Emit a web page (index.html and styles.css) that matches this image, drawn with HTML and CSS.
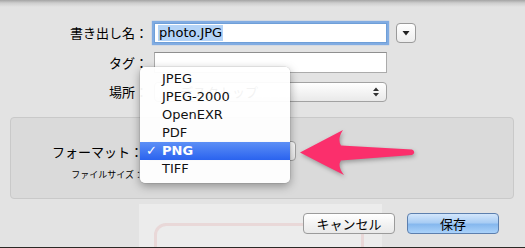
FILE: index.html
```html
<!DOCTYPE html>
<html lang="ja">
<head>
<meta charset="utf-8">
<link rel="stylesheet" href="styles.css">
</head>
<body>
<div class="sheet">
  <div class="ghost"><div class="ghost-frame"></div></div>

  <div class="row r1">
    <span class="label">書き出し名：</span>
    <div class="field focus"><span class="sel">photo.JPG</span></div>
    <div class="disclose"><svg width="10" height="8" viewBox="0 0 10 8"><path d="M1.5 2 L8.5 2 L5 6.5 Z" fill="#222"/></svg></div>
  </div>
  <div class="row r2">
    <span class="label">タグ：</span>
    <div class="field"></div>
  </div>
  <div class="row r3">
    <span class="label">場所：</span>
    <div class="popup loc">
      <span class="ptext">デスクトップ</span>
      <svg class="updown" width="8" height="12" viewBox="0 0 8 12"><path d="M4 1.5 L7 5 L1 5 Z M4 10.5 L7 7 L1 7 Z" fill="#333"/></svg>
    </div>
  </div>

  <div class="panel">
    <div class="prow">
      <span class="plabel">フォーマット：</span>
      <div class="popup fmt"></div>
    </div>
    <div class="prow small">
      <span class="plabel sm">ファイルサイズ：</span>
    </div>
  </div>

  <div class="footer">
    <div class="btn">キャンセル</div>
    <div class="btn primary">保存</div>
  </div>

  <div class="menu">
    <div class="item">JPEG</div>
    <div class="item">JPEG-2000</div>
    <div class="item">OpenEXR</div>
    <div class="item">PDF</div>
    <div class="item on"><span class="check">✓</span>PNG</div>
    <div class="item">TIFF</div>
  </div>

  <svg class="arrow" width="525" height="248" viewBox="0 0 525 248">
    <path d="M300 152.5 Q322 141 343 130 Q337 139 341 145.5 L412 149.5 Q416.5 152 412 155 L341 160.5 Q337 166 344 175 Q322 164 300 152.5 Z" fill="#fb2f6c"/>
  </svg>
</div>
</body>
</html>
```

FILE: styles.css
```css
html, body {
  margin: 0;
  height: 248px;
  overflow: hidden;
}
body {
  font-family: "DejaVu Sans", "Noto Sans CJK JP", sans-serif;
  font-size: 13px;
  color: #000;
}
.sheet {
  position: relative;
  height: 248px;
  box-sizing: border-box;
  padding-top: 23px;
  background: linear-gradient(#a4a4a4 0, #cdcdcd 3px, #e3e3e3 7px);
  border-bottom: 1px solid #2c2926;
}
.row {
  display: flex;
  align-items: center;
  height: 20px;
}
.r2 { margin-top: 9px; height: 21px; }
.r3 { margin-top: 9px; }
.label {
  flex: none;
  width: 148px;
  text-align: right;
  font-family: "Noto Sans CJK JP", sans-serif;
  font-size: 13px;
  line-height: 20px;
}
.field {
  flex: none;
  box-sizing: border-box;
  margin-left: 6px;
  width: 233px;
  height: 100%;
  background: #fff;
  border: 1px solid #ababab;
  border-top-color: #8f8f8f;
  display: flex;
  align-items: center;
}
.focus {
  border-color: #6f9fd8;
  box-shadow: 0 0 1px 2px rgba(112, 162, 226, 0.85);
}
.sel {
  margin-left: 3px;
  padding: 0 1px;
  line-height: 16px;
  background: #b3d3f7;
}
.disclose {
  flex: none;
  box-sizing: border-box;
  margin-left: 9px;
  width: 20px;
  height: 20px;
  border: 1px solid #9a9a9a;
  border-radius: 4px;
  background: linear-gradient(#ffffff, #ededed);
  display: flex;
  align-items: center;
  justify-content: center;
}
.popup {
  flex: none;
  box-sizing: border-box;
  height: 20px;
  border: 1px solid #a2a2a2;
  border-radius: 4px;
  background: linear-gradient(#ffffff, #e9e9e9);
  display: flex;
  align-items: center;
  position: relative;
}
.loc {
  margin-left: 6px;
  width: 233px;
  padding-left: 25px;
}
.ptext {
  font-family: "Noto Sans CJK JP", sans-serif;
  line-height: 18px;
}
.updown {
  margin-left: auto;
  margin-right: 6px;
}
.panel {
  box-sizing: border-box;
  margin: 15px 11px 0 10px;
  height: 82px;
  padding-top: 23px;
  border: 1px solid #c9c9c9;
  border-radius: 4px;
  background: #dadada;
}
.prow {
  display: flex;
  align-items: center;
  height: 20px;
}
.prow.small {
  margin-top: 5px;
  height: 16px;
}
.plabel {
  flex: none;
  width: 132px;
  text-align: right;
  font-family: "Noto Sans CJK JP", sans-serif;
  font-size: 13px;
}
.plabel.sm {
  font-size: 9px;
}
.fmt {
  margin-left: 3px;
  width: 150px;
}
.footer {
  position: relative;
  z-index: 1;
  display: flex;
  justify-content: flex-end;
  gap: 12px;
  margin-top: 14px;
  padding-right: 26px;
}
.btn {
  box-sizing: border-box;
  width: 92px;
  height: 21px;
  border: 1px solid #9b9b9b;
  border-radius: 4px;
  background: linear-gradient(#ffffff, #f1f1f1 60%, #e9e9e9);
  font-family: "Noto Sans CJK JP", sans-serif;
  font-size: 13px;
  line-height: 19px;
  text-align: center;
}
.btn.primary {
  border-color: #5c7fae;
  background: linear-gradient(#d3e6fb 0, #a9cdf4 45%, #86b8ee 55%, #aad2fa 100%);
}
.ghost {
  position: absolute;
  left: 139px;
  top: 204px;
  width: 243px;
  height: 43px;
  background: #ececec;
  overflow: hidden;
}
.ghost-frame {
  margin: 19px 0 0 15px;
  width: 210px;
  height: 60px;
  box-sizing: border-box;
  border: 3px solid rgba(226, 170, 170, 0.3);
  border-radius: 12px;
}
.menu {
  position: absolute;
  left: 140px;
  top: 67px;
  width: 150px;
  height: 116px;
  box-sizing: border-box;
  padding-top: 3px;
  border-radius: 5px;
  background: rgba(255, 255, 255, 0.95);
  box-shadow: 0 3px 10px rgba(0, 0, 0, 0.35), 0 0 0 0.5px rgba(0, 0, 0, 0.12);
  z-index: 2;
}
.item {
  position: relative;
  height: 18px;
  line-height: 18px;
  padding-left: 22px;
  font-size: 13px;
  color: #111;
}
.item.on {
  color: #fff;
  font-weight: bold;
  background: linear-gradient(#5d90f6, #2a63ef);
}
.check {
  position: absolute;
  left: 6px;
  top: 0;
  font-weight: bold;
}
.arrow {
  position: absolute;
  left: 0;
  top: 0;
  z-index: 3;
  filter: drop-shadow(1px 2px 2px rgba(0, 0, 0, 0.3));
}
```
